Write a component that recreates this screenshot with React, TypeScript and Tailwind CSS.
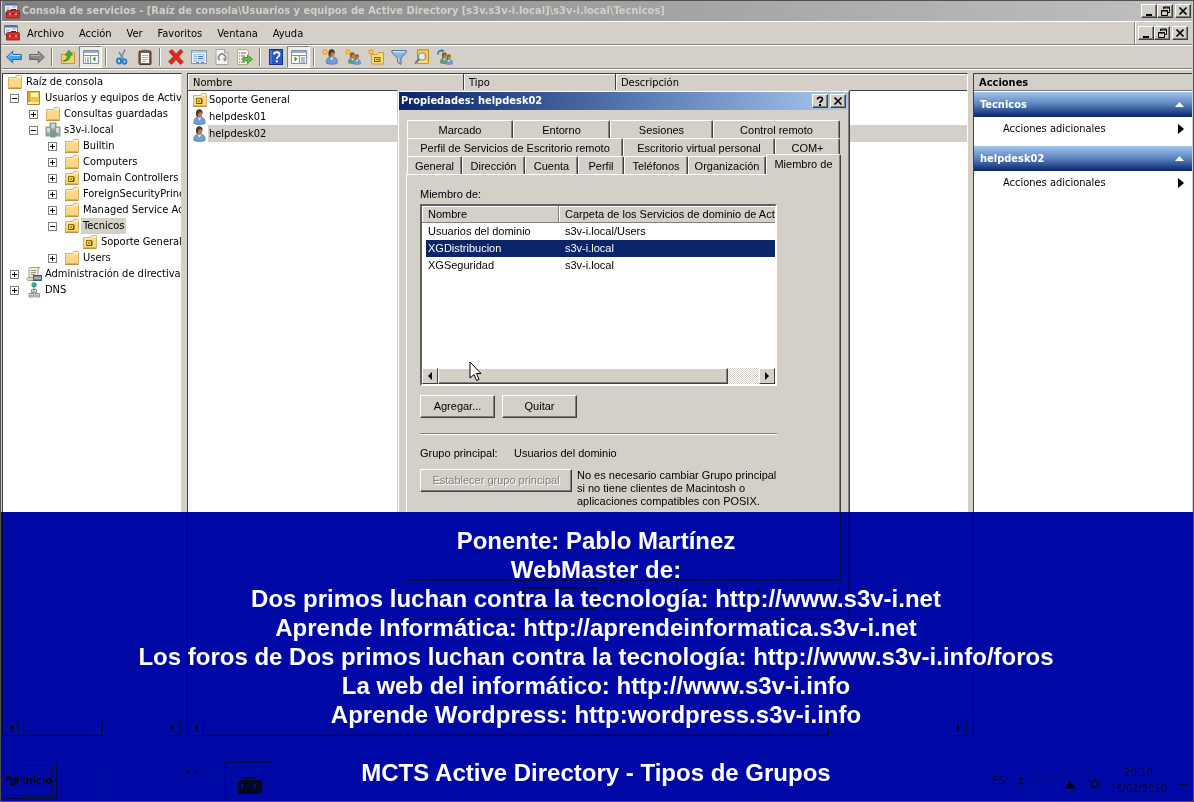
import type { ReactNode } from "react";
import clsx from "clsx";

const RAISED = "border border-t-white border-l-white border-r-[#404040] border-b-[#404040] bg-[#d4d0c8]";

/* ---------- icons ---------- */

function Svg({ children, size = 16, className }: { children: ReactNode; size?: number; className?: string }) {
  return (
    <svg width={size} height={size} viewBox="0 0 16 16" className={clsx("shrink-0", className)} aria-hidden="true">
      {children}
    </svg>
  );
}

function FolderIcon({ ou = false }: { ou?: boolean }) {
  return (
    <Svg>
      <path d="M1.500 3.500h7l1-2h4.500l.5 1v11h-13z" fill="#f9d888" stroke="#dbb05e" />
      <path d="M9.500 2.500h4.500" stroke="#fff6d8" />
      <path d="M2 4.500h7.500l1-1h3.500" stroke="#ffeeb8" fill="none" />
      <path d="M1 14.500h13.500" stroke="#c08f3c" />
      {ou && (
        <>
          <rect x="4.500" y="6.500" width="5" height="5" fill="#f0d04e" stroke="#8f7410" />
          <path d="M5 11.500h5V7" stroke="#5e4a04" fill="none" />
          <rect x="6" y="8" width="2" height="2" fill="#b8941a" />
        </>
      )}
    </Svg>
  );
}

function BookIcon() {
  return (
    <Svg>
      <path d="M1.500 1.500h12v13h-12z" fill="#f0c43c" stroke="#b4862a" />
      <path d="M2 2h2v12H2z" fill="#d9a32c" />
      <rect x="5" y="3" width="7" height="4" fill="#fff3c4" />
      <path d="M2 13h11" stroke="#fffbe6" strokeWidth="1.500" />
    </Svg>
  );
}

function DomainIcon() {
  return (
    <Svg>
      <rect x="5" y="1" width="6" height="9" fill="#a8b6b6" stroke="#6c7e7e" strokeWidth=".8" />
      <rect x="1" y="5" width="5" height="9" fill="#b3c2c2" stroke="#6c7e7e" strokeWidth=".8" />
      <rect x="10" y="5" width="5" height="9" fill="#b3c2c2" stroke="#6c7e7e" strokeWidth=".8" />
      <rect x="6" y="9" width="4" height="6" fill="#8fa0a0" stroke="#6c7e7e" strokeWidth=".8" />
      <path d="M6 3h4M6 5h4M2 7h3M2 9h3M11 7h3M11 9h3" stroke="#eef4f4" />
      <path d="M2 12h2M11 12h2M7 12h2" stroke="#41b04a" strokeWidth="1.500" />
    </Svg>
  );
}

function PolicyIcon() {
  return (
    <Svg>
      <path d="M4 1.500h10c-1.500 0-2 1-2 2.500v8H3V3c0-1 .3-1.500 1-1.500z" fill="#f2ecd6" stroke="#8f8a78" strokeWidth=".8" />
      <path d="M5 4.500h5M5 6.500h5M5 8.500h4" stroke="#9a947f" />
      <path d="M1 13.500c0-1.200.8-2 2-2h6v3H2.500c-1 0-1.500-.5-1.500-1z" fill="#e8d9a4" stroke="#8f8a78" strokeWidth=".8" />
      <rect x="7.500" y="9.500" width="8" height="5" fill="#74869c" stroke="#4a586b" />
      <path d="M8 12h7" stroke="#c9d4e2" />
    </Svg>
  );
}

function DnsIcon() {
  return (
    <Svg>
      <circle cx="8" cy="2.800" r="2.600" fill="#1b93a8" />
      <path d="M6 2l2-1 1 2-2 1z" fill="#55c07d" />
      <path d="M8 5.500v2" stroke="#777" />
      <path d="M5.500 7.500h5v3h-5zM3 11.500h4.500v3.500H3zM9 11.500h4.500v3.500H9z" fill="#eceff0" stroke="#7a8588" strokeWidth=".9" />
      <path d="M6.500 9h3M4 13.300h2.500M10 13.300h2.500" stroke="#8d999c" />
    </Svg>
  );
}

function Person({ x = 0, y = 0, s = 1, body = "#6f9dd6", hair = "#4a3a30" }: { x?: number; y?: number; s?: number; body?: string; hair?: string }) {
  return (
    <g transform={`translate(${x} ${y}) scale(${s})`}>
      <path d="M2.500 14.500c-.5-4 1-6 4-6h3c3 0 4.500 2 4 6-2 1.300-9 1.300-11 0z" fill={body} stroke="#4672a8" strokeWidth=".7" />
      <path d="M6 8.500l2 3 2-3z" fill="#eef4fb" />
      <ellipse cx="7.800" cy="5" rx="2.900" ry="3.900" fill="#b98052" />
      <path d="M4.600 5.500C4.200 1.500 6 .3 8 .3s3.500 1.700 3.100 4.900C10.500 3.800 9.500 3.200 8.300 3.400c-1 .2-1.300.8-1.500 1.600-.2 1-.2 2.500-.8 3.300-.8-.7-1.300-1.500-1.400-2.800z" fill={hair} />
    </g>
  );
}

function Spark() {
  return (
    <g>
      <path d="M3 0v6M0 3h6M1 1l4 4M5 1l-4 4" stroke="#f59a1b" strokeWidth="1.200" />
      <circle cx="3" cy="3" r="1.500" fill="#ffc84a" />
    </g>
  );
}

function UserIcon() {
  return (
    <Svg>
      <Person x={-0.500} />
    </Svg>
  );
}

function ToolboxIcon() {
  return (
    <Svg>
      <path d="M.5.5h13v9H.5z" fill="#eef2f7" stroke="#6b7d98" />
      <path d="M1 1.500h12" stroke="#4f6fa3" strokeWidth="2" />
      <path d="M2 5h4M2 7h3M8 4h4" stroke="#9aa8bd" />
      <path d="M7.500 8V6.500h4V8" fill="none" stroke="#7d1712" strokeWidth="1.200" />
      <path d="M2.500 8.500l1-1H15l.7 1V15H2.500z" fill="#d6342a" stroke="#8c1812" strokeWidth=".8" />
      <path d="M2.500 10.800h13" stroke="#8c1812" />
      <path d="M6 10v2M12 10v2" stroke="#f6d8d2" strokeWidth="1.200" />
    </Svg>
  );
}

const paneIcon = (flip: boolean) => (
  <Svg>
    <path d="M.5 1.500h15v13H.5z" fill="#fdfdfd" stroke="#8490a4" />
    <path d="M1 3h14" stroke="#9ba8c0" strokeWidth="2" />
    <path d="M1 6.500h14" stroke="#8490a4" />
    {flip ? (
      <>
        <path d="M3.500 7.500v5l3-2.500z" fill="#23a01d" />
        <path d="M8.500 7v7" stroke="#8490a4" />
        <path d="M10 9h4M10 11h4M10 13h4" stroke="#5d7bb0" />
      </>
    ) : (
      <>
        <path d="M7.500 7v7" stroke="#8490a4" />
        <path d="M2 9h1M4 9h2M2 11h1M4 11h2M2 13h1M4 13h2" stroke="#5d7bb0" />
        <path d="M12.500 7.500v5l-3-2.500z" fill="#23a01d" />
      </>
    )}
  </Svg>
);

const ICONS: Record<string, ReactNode> = {
  back: (
    <Svg>
      <path d="M.7 8l6-5.800v3.300h8.600v5H6.700v3.300z" fill="#45a7ea" stroke="#1764ad" />
      <path d="M2.500 7.800L6 4.500v2h8.500" stroke="#b5e1fb" fill="none" />
    </Svg>
  ),
  forward: (
    <Svg>
      <path d="M15.300 8l-6-5.800v3.300H.7v5h8.600v3.300z" fill="#8b8b8b" stroke="#626262" />
      <path d="M1.500 6.500h8.500v-2" stroke="#b8b8b8" fill="none" />
    </Svg>
  ),
  up: (
    <Svg>
      <path d="M1.500 5.500h6l1-2h6v11h-13z" fill="#f5ce6e" stroke="#c4943c" />
      <path d="M3 12c3-.5 4.500-3 4.500-6H5.200L9 1.200 12.500 6h-2.200c0 4-3 6.500-7.300 6z" fill="#3fb62d" stroke="#217a18" strokeWidth=".7" />
    </Svg>
  ),
  tree: paneIcon(false),
  cut: (
    <Svg>
      <path d="M11 .5L6.500 10M5 3l4.500 7.500" stroke="#7189a8" strokeWidth="1.500" />
      <ellipse cx="5" cy="12" rx="2" ry="2.600" fill="none" stroke="#1878d2" strokeWidth="1.800" />
      <ellipse cx="10.500" cy="12.600" rx="1.900" ry="2.200" fill="none" stroke="#1878d2" strokeWidth="1.800" />
    </Svg>
  ),
  paste: (
    <Svg>
      <rect x="2" y="2" width="12" height="13.500" rx="1" fill="#8a5f38" stroke="#55371c" />
      <rect x="4" y="4" width="8" height="10" fill="#fff" />
      <rect x="5.500" y=".8" width="5" height="3" fill="#5f6266" />
      <path d="M5 6.500h6M5 8.500h6M5 10.500h6M5 12.500h4" stroke="#a9aeb6" />
    </Svg>
  ),
  remove: (
    <Svg>
      <path d="M1 2.800L4 .5l4 4.400L12.500.2 15 2.800l-4.500 4.900 4.800 5-2.800 2.900L8 10.500l-4.500 5-3-2.700L5.300 7.600z" fill="#e3271b" stroke="#a3130b" strokeWidth=".6" />
    </Svg>
  ),
  props: (
    <Svg>
      <rect x=".5" y="1.500" width="15" height="13" fill="#f4f8fc" stroke="#8798ab" />
      <path d="M1 3h14" stroke="#b9c9da" strokeWidth="2" />
      <rect x="3" y="5.500" width="10" height="6.500" fill="#d7e9f8" stroke="#8fb1d0" strokeWidth=".8" />
      <path d="M4.500 7.500h1M7 7.500h5M4.500 9.500h1M7 9.500h5" stroke="#3e7bb5" />
      <path d="M5 13.500h3M10 13.500h3" stroke="#6f8296" />
    </Svg>
  ),
  refresh: (
    <Svg>
      <path d="M2 .5h8.500L14 4v11.500H2z" fill="#f5f5f5" stroke="#a2a2a2" />
      <path d="M10.500.5V4H14" fill="#ddd" stroke="#a2a2a2" />
      <path d="M5.800 11.300A3.500 3.500 0 1 1 11 10.500" fill="none" stroke="#8b8b8b" strokeWidth="1.700" />
      <path d="M8.500 9.500h4.300L11 13z" fill="#8b8b8b" />
    </Svg>
  ),
  exportList: (
    <Svg>
      <path d="M.5.5h9l2 2v13H.5z" fill="#fbf7e4" stroke="#b8a988" />
      <path d="M2 4h1M4 4h5M2 7h1M4 7h4M2 10h1M4 10h2M2 13h1M4 13h4" stroke="#5c6673" />
      <path d="M6 8.500h4.500V6l5 4.200-5 4.200v-2.600H6z" fill="#5ec43d" stroke="#2e8a1b" strokeWidth=".8" />
    </Svg>
  ),
  help: (
    <Svg>
      <rect x="1.500" y=".5" width="13" height="15" fill="#2b57c6" stroke="#183584" />
      <path d="M3 1v14" stroke="#6f93e6" />
      <path d="M6 5.500C6 2.500 11.500 2.500 11.500 5.500c0 2-2.700 2.200-2.700 4.500" fill="none" stroke="#fff" strokeWidth="1.800" />
      <rect x="7.800" y="11.300" width="2" height="2" fill="#fff" />
    </Svg>
  ),
  actionPane: paneIcon(true),
  newUser: (
    <Svg>
      <Person x={2} y={0} s={0.980} />
      <Spark />
    </Svg>
  ),
  newGroup: (
    <Svg>
      <Person x={1.500} y={3} s={0.750} body="#5ea556" hair="#7d5a21" />
      <Person x={6.500} y={5} s={0.680} hair="#9c5c2c" />
      <Spark />
    </Svg>
  ),
  newOu: (
    <Svg>
      <path d="M3.500 5.500h6l1-2h5v11.500h-12z" fill="#f8dc76" stroke="#c99d37" />
      <rect x="6.500" y="8.500" width="5.500" height="4" fill="#f5d050" stroke="#806306" />
      <path d="M8 10.500h3" stroke="#806306" />
      <Spark />
    </Svg>
  ),
  filter: (
    <Svg>
      <path d="M.8 1.500h14.400v2L10 9v6.500L6.500 13V9L.8 3.500z" fill="#8fb4d8" stroke="#48709c" strokeWidth=".9" />
      <path d="M2 2.800h12" stroke="#e6f1fa" />
      <path d="M7.500 9v3.500" stroke="#d5e6f5" />
    </Svg>
  ),
  find: (
    <Svg>
      <path d="M3.500.8h11v13.500h-11z" fill="#f3cc4f" stroke="#b28a26" />
      <path d="M4 13h10" stroke="#fff5cf" />
      <circle cx="8" cy="7.500" r="3.500" fill="#e3eef6" stroke="#8b98a3" strokeWidth="1.200" />
      <path d="M5.500 10L1 14.500" stroke="#6b7680" strokeWidth="1.800" />
    </Svg>
  ),
  addToGroup: (
    <Svg>
      <Person x={1.500} y={3} s={0.750} body="#5ea556" hair="#7d5a21" />
      <Person x={6.500} y={5} s={0.680} hair="#9c5c2c" />
      <path d="M.8 5.500C.8 2.500 2.500 1.500 5 1.500" fill="none" stroke="#2176c4" strokeWidth="1.500" />
      <path d="M4.500 0l3 1.600-3 2z" fill="#2176c4" />
    </Svg>
  ),
};

/* ---------- small controls ---------- */

const GLYPHS: Record<string, ReactNode> = {
  minimize: <path d="M2 8h6v2H2z" fill="#000" />,
  restore: <path d="M3.500 3V1h6v5.500H7.500M3 2h7M1.500 4.500h6v5h-6zM1 5h7" fill="none" stroke="#000" />,
  close: <path d="M1.500 1.500l7 7M8.500 1.500l-7 7" stroke="#000" strokeWidth="1.700" />,
  help: (
    <>
      <path d="M2.500 3.500C2.500.5 7.500.5 7.500 3.300 7.500 5 5 5 5 7" fill="none" stroke="#000" strokeWidth="1.600" />
      <path d="M4 8h2v2H4z" fill="#000" />
    </>
  ),
};

function CaptionButton({ kind, label }: { kind: string; label: string }) {
  return (
    <button aria-label={label} className={clsx(RAISED, "flex h-[14px] w-4 items-center justify-center shadow-[inset_-1px_-1px_#808080]")}>
      <svg width="10" height="10" viewBox="0 0 10 10">{GLYPHS[kind]}</svg>
    </button>
  );
}

function CaptionButtons() {
  return (
    <div className="flex">
      <CaptionButton kind="minimize" label="Minimizar" />
      <CaptionButton kind="restore" label="Restaurar" />
      <span className="w-[2px]" />
      <CaptionButton kind="close" label="Cerrar" />
    </div>
  );
}

function ScrollBar({ thumb }: { thumb: string }) {
  const arrow = clsx(RAISED, "flex w-4 shrink-0 items-center justify-center");
  return (
    <div className="flex h-4 shrink-0 bg-[repeating-conic-gradient(#ffffff_0_25%,#d4d0c8_0_50%)] bg-[length:2px_2px]">
      <button aria-label="Desplazar a la izquierda" className={arrow}>
        <svg width="4" height="8" viewBox="0 0 4 8"><path d="M4 0v8L0 4z" /></svg>
      </button>
      <div className={clsx(RAISED, "shadow-[inset_-1px_-1px_#808080]", thumb)} />
      <button aria-label="Desplazar a la derecha" className={clsx(arrow, "ml-auto")}>
        <svg width="4" height="8" viewBox="0 0 4 8"><path d="M0 0v8l4-4z" /></svg>
      </button>
    </div>
  );
}

function PushButton({ children, label, disabled, className }: { children?: ReactNode; label?: string; disabled?: boolean; className?: string }) {
  return (
    <button
      disabled={disabled}
      aria-label={label}
      className={clsx(
        RAISED,
        "h-[23px] pb-px shadow-[inset_-1px_-1px_#808080]",
        disabled && "text-[#808080] [text-shadow:1px_1px_#ffffff]",
        className ?? "w-[75px]",
      )}
    >
      {children}
    </button>
  );
}

/* ---------- main window ---------- */

const MENU = ["Archivo", "Acción", "Ver", "Favoritos", "Ventana", "Ayuda"];

const TOOLBAR: { icon: string; label: string; pressed?: boolean }[][] = [
  [{ icon: "back", label: "Atrás" }, { icon: "forward", label: "Adelante" }],
  [{ icon: "up", label: "Subir un nivel" }, { icon: "tree", label: "Árbol de consola", pressed: true }],
  [{ icon: "cut", label: "Cortar" }, { icon: "paste", label: "Pegar" }],
  [
    { icon: "remove", label: "Eliminar" },
    { icon: "props", label: "Propiedades" },
    { icon: "refresh", label: "Actualizar" },
    { icon: "exportList", label: "Exportar lista" },
  ],
  [{ icon: "help", label: "Ayuda" }, { icon: "actionPane", label: "Panel de acciones", pressed: true }],
  [
    { icon: "newUser", label: "Nuevo usuario" },
    { icon: "newGroup", label: "Nuevo grupo" },
    { icon: "newOu", label: "Nueva unidad organizativa" },
    { icon: "filter", label: "Filtro" },
    { icon: "find", label: "Buscar" },
    { icon: "addToGroup", label: "Agregar a un grupo" },
  ],
];

type Node = { label: string; pad: string; icon: ReactNode; sign?: "+" | "-"; selected?: boolean };

const TREE: Node[] = [
  { label: "Raíz de consola", pad: "pl-1", icon: <FolderIcon /> },
  { label: "Usuarios y equipos de Active", pad: "pl-[7px]", icon: <BookIcon />, sign: "-" },
  { label: "Consultas guardadas", pad: "pl-[26px]", icon: <FolderIcon />, sign: "+" },
  { label: "s3v-i.local", pad: "pl-[26px]", icon: <DomainIcon />, sign: "-" },
  { label: "Builtin", pad: "pl-[45px]", icon: <FolderIcon />, sign: "+" },
  { label: "Computers", pad: "pl-[45px]", icon: <FolderIcon />, sign: "+" },
  { label: "Domain Controllers", pad: "pl-[45px]", icon: <FolderIcon ou />, sign: "+" },
  { label: "ForeignSecurityPrinc", pad: "pl-[45px]", icon: <FolderIcon />, sign: "+" },
  { label: "Managed Service Ac", pad: "pl-[45px]", icon: <FolderIcon />, sign: "+" },
  { label: "Tecnicos", pad: "pl-[45px]", icon: <FolderIcon ou />, sign: "-", selected: true },
  { label: "Soporte General", pad: "pl-[79px]", icon: <FolderIcon ou /> },
  { label: "Users", pad: "pl-[45px]", icon: <FolderIcon />, sign: "+" },
  { label: "Administración de directivas", pad: "pl-[7px]", icon: <PolicyIcon />, sign: "+" },
  { label: "DNS", pad: "pl-[7px]", icon: <DnsIcon />, sign: "+" },
];

function Toolbar() {
  return (
    <div className="flex h-6 shrink-0 items-center border-t border-b border-t-white border-b-[#808080]">
      {TOOLBAR.map((group, i) => (
        <div key={i} className="flex items-center">
          {i > 0 && <span className="mx-[3px] h-[18px] w-[2px] border-r border-l border-r-white border-l-[#808080]" />}
          {group.map((b) => (
            <button
              key={b.icon}
              aria-label={b.label}
              className={clsx(
                "flex h-[22px] w-[23px] items-center justify-center",
                b.pressed && "border border-t-[#808080] border-r-white border-b-white border-l-[#808080] bg-[#ecebe6]",
              )}
            >
              {ICONS[b.icon]}
            </button>
          ))}
        </div>
      ))}
    </div>
  );
}

function TreePane() {
  return (
    <div className="flex w-[180px] shrink-0 flex-col border-t border-r border-l border-t-[#404040] border-r-[#d4d0c8] border-l-[#404040] bg-white">
      <ul className="flex-1 overflow-hidden">
        {TREE.map((n) => (
          <li key={n.label} className={clsx("flex h-4 items-center whitespace-nowrap", n.pad)}>
            {n.sign && (
              <button aria-label={n.label} className="mr-[7px] flex h-[9px] w-[9px] shrink-0 items-center justify-center border border-[#808080]">
                <svg width="5" height="5" viewBox="0 0 5 5">
                  <path d={n.sign === "+" ? "M0 2.500h5M2.500 0v5" : "M0 2.500h5"} stroke="#000" />
                </svg>
              </button>
            )}
            {n.icon}
            <span className={clsx("ml-px px-[2px] leading-4", n.selected && "bg-[#d4d0c8]")}>{n.label}</span>
          </li>
        ))}
      </ul>
      <ScrollBar thumb="w-[84px]" />
    </div>
  );
}

function ListPane() {
  const th = "h-[17px] border-r border-b border-[#404040] p-0 pt-px pl-[5px] text-left font-normal leading-[15px] shadow-[inset_1px_1px_#ffffff]";
  const rows = [
    { name: "Soporte General", icon: <FolderIcon ou /> },
    { name: "helpdesk01", icon: <UserIcon /> },
    { name: "helpdesk02", icon: <UserIcon />, selected: true },
  ];
  return (
    <div className="flex min-w-0 flex-1 flex-col border-t border-r border-l border-t-[#404040] border-r-white border-l-[#404040] bg-white">
      <div className="flex-1">
        <table className="w-full table-fixed border-separate border-spacing-0">
          <colgroup>
            <col className="w-[276px]" />
            <col className="w-[152px]" />
            <col />
          </colgroup>
          <thead className="bg-[#d4d0c8]">
            <tr>
              <th className={th}>Nombre</th>
              <th className={th}>Tipo</th>
              <th className={clsx(th, "border-r-0")}>Descripción</th>
            </tr>
          </thead>
          <tbody>
            {rows.map((r) => (
              <tr key={r.name}>
                <td className="p-0">
                  <div className="flex h-[17px] items-center pl-1">
                    {r.icon}
                    <span className={clsx("flex-1 pl-px leading-[17px]", r.selected && "bg-[#d4d0c8]")}>{r.name}</span>
                  </div>
                </td>
                <td colSpan={2} className={clsx("p-0", r.selected && "bg-[#d4d0c8]")} />
              </tr>
            ))}
          </tbody>
        </table>
      </div>
      <ScrollBar thumb="w-[625px]" />
    </div>
  );
}

function ActionsPane() {
  return (
    <div className="w-[219px] shrink-0 border-t border-l border-[#404040] bg-white">
      <h2 className="mb-px h-[17px] border-b border-[#808080] bg-[#d4d0c8] pl-[5px] leading-[17px] font-bold">Acciones</h2>
      {["Tecnicos", "helpdesk02"].map((name) => (
        <section key={name} className="pb-[5px]">
          <button className="flex h-[25px] w-full items-center justify-between bg-linear-to-b from-[#a3c6ee] via-[#5a82bd] to-[#0a246a] pr-2 pl-[6px] font-bold text-white">
            {name}
            <svg width="9" height="5" viewBox="0 0 9 5"><path d="M0 5h9L4.500 0z" fill="#fff" /></svg>
          </button>
          <button className="flex h-6 w-full items-center justify-between pr-2 pl-[29px]">
            Acciones adicionales
            <svg width="6" height="10" viewBox="0 0 6 10"><path d="M0 0v10l6-5z" /></svg>
          </button>
        </section>
      ))}
    </div>
  );
}

function ConsoleWindow() {
  return (
    <div className="flex min-h-0 flex-1 flex-col bg-[#d4d0c8] px-px">
      <header className="flex h-5 shrink-0 items-center bg-linear-to-r from-[#808080] to-[#c0c0c0] pr-px pl-[2px]">
        <ToolboxIcon />
        <h1 className="flex-1 truncate pl-[2px] font-bold text-[#d4d0c8]">
          Consola de servicios - [Raíz de consola\Usuarios y equipos de Active Directory [s3v.s3v-i.local]\s3v-i.local\Tecnicos]
        </h1>
        <CaptionButtons />
      </header>
      <div className="flex h-6 shrink-0 items-stretch border-t border-b border-t-white border-b-[#808080]">
        <div className="flex flex-1 items-center border-r border-[#808080] pl-[2px]">
          <ToolboxIcon />
          <nav className="flex gap-px pt-px">
            {MENU.map((m) => (
              <button key={m} className="px-[7px]">{m}</button>
            ))}
          </nav>
        </div>
        <div className="flex items-center border-l border-white pr-1 pl-[2px]">
          <CaptionButtons />
        </div>
      </div>
      <Toolbar />
      <main className="flex min-h-0 flex-1 gap-[5px] border-t border-white pt-[3px]">
        <TreePane />
        <ListPane />
        <ActionsPane />
      </main>
      <footer className="h-[22px] shrink-0" />
    </div>
  );
}

/* ---------- properties dialog ---------- */

function Tab({ children, width, active }: { children: ReactNode; width: string; active?: boolean }) {
  return (
    <button
      role="tab"
      aria-selected={!!active}
      className={clsx(
        "rounded-t-[2px] border-t border-r border-l border-t-white border-r-[#404040] border-l-white bg-[#d4d0c8] whitespace-nowrap shadow-[inset_-1px_0_#808080]",
        active ? "relative z-10 -mt-[2px] -mr-px -mb-px h-[21px] pb-[2px]" : "h-[18px]",
        width,
      )}
    >
      {children}
    </button>
  );
}

function MemberList() {
  const th = "h-[17px] border-b border-[#808080] p-0 pl-[6px] text-left font-normal leading-4 whitespace-nowrap shadow-[inset_1px_1px_#ffffff]";
  const members = [
    ["Usuarios del dominio", "s3v-i.local/Users"],
    ["XGDistribucion", "s3v-i.local"],
    ["XGSeguridad", "s3v-i.local"],
  ];
  return (
    <div className="mt-[3px] flex h-[182px] w-[357px] flex-col border-2 border-t-[#606060] border-r-white border-b-white border-l-[#606060] bg-white">
      <div className="flex-1 overflow-hidden">
        <table className="w-full table-fixed border-separate border-spacing-0">
          <colgroup>
            <col className="w-[137px]" />
            <col />
          </colgroup>
          <thead className="bg-[#d4d0c8]">
            <tr>
              <th className={clsx(th, "border-r")}>Nombre</th>
              <th className={clsx(th, "overflow-hidden")}>Carpeta de los Servicios de dominio de Activ</th>
            </tr>
          </thead>
          <tbody>
            {members.map(([name, folder], i) => (
              <tr key={name} className={clsx(i === 1 && "text-white")}>
                <td className="p-0 pl-1">
                  <div className={clsx("h-[17px] pl-[2px] leading-[17px]", i === 1 && "bg-[#0a246a]")}>{name}</div>
                </td>
                <td className={clsx("p-0 pl-[6px] leading-[17px]", i === 1 && "bg-[#0a246a]")}>{folder}</td>
              </tr>
            ))}
          </tbody>
        </table>
      </div>
      <ScrollBar thumb="w-[290px]" />
    </div>
  );
}

function PropertiesDialog() {
  return (
    <div
      role="dialog"
      aria-label="Propiedades: helpdesk02"
      className="absolute top-[89px] left-[396px] isolate w-[453px] border border-t-[#d4d0c8] border-r-[#404040] border-b-[#404040] border-l-[#d4d0c8] bg-[#d4d0c8]"
    >
      <div className="border border-t-white border-r-[#808080] border-b-[#808080] border-l-white">
        <div className="flex h-[18px] items-center bg-linear-to-r from-[#0a246a] to-[#a6caf0] pr-[2px] pl-[2px]">
          <h2 className="flex-1 font-bold text-white">Propiedades: helpdesk02</h2>
          <div className="flex gap-[2px]">
            <CaptionButton kind="help" label="Ayuda" />
            <CaptionButton kind="close" label="Cerrar" />
          </div>
        </div>
        <div className="px-[7px] pt-[10px] pb-2 font-['Liberation_Sans',Arial,sans-serif]">
          <div role="tablist">
            <div className="flex px-px">
              <Tab width="w-[106px]">Marcado</Tab>
              <Tab width="w-[97px]">Entorno</Tab>
              <Tab width="w-[103px]">Sesiones</Tab>
              <Tab width="flex-1">Control remoto</Tab>
            </div>
            <div className="flex px-px">
              <Tab width="w-[216px]">Perfil de Servicios de Escritorio remoto</Tab>
              <Tab width="w-[152px]">Escritorio virtual personal</Tab>
              <Tab width="flex-1">COM+</Tab>
            </div>
            <div className="flex h-[18px] px-px">
              <Tab width="w-[55px]">General</Tab>
              <Tab width="w-[63px]">Dirección</Tab>
              <Tab width="w-[53px]">Cuenta</Tab>
              <Tab width="w-[46px]">Perfil</Tab>
              <Tab width="w-[64px]">Teléfonos</Tab>
              <Tab width="w-[78px]">Organización</Tab>
              <Tab width="flex-1" active>Miembro de</Tab>
            </div>
          </div>
          <div className="min-h-[407px] border border-t-white border-r-[#404040] border-b-[#404040] border-l-white px-[13px] pt-3 shadow-[inset_-1px_-1px_#808080]">
            <p className="leading-[14px]">Miembro de:</p>
            <MemberList />
            <div className="mt-[9px] flex gap-[7px]">
              <PushButton>Agregar...</PushButton>
              <PushButton>Quitar</PushButton>
            </div>
            <hr className="mt-[15px] h-[2px] w-[357px] border-t border-b border-t-[#808080] border-b-white" />
            <div className="mt-[11px] flex leading-[14px]">
              <span className="w-[94px]">Grupo principal:</span>
              <span>Usuarios del dominio</span>
            </div>
            <div className="mt-[9px] flex gap-[5px]">
              <PushButton disabled className="w-[152px]">Establecer grupo principal</PushButton>
              <p className="leading-[13px]">
                No es necesario cambiar Grupo principal
                <br />
                si no tiene clientes de Macintosh o
                <br />
                aplicaciones compatibles con POSIX.
              </p>
            </div>
          </div>
          <div className="mt-[6px] flex justify-end gap-[6px] pr-px">
            <button aria-label="Aceptar" className="h-[23px] w-[75px] border-2 border-[#404040]" />
            <PushButton label="Cancelar" />
            <PushButton label="Aplicar" disabled />
            <PushButton label="Ayuda" />
          </div>
        </div>
      </div>
    </div>
  );
}

/* ---------- taskbar and caption band ---------- */

function Taskbar() {
  return (
    <div className="flex h-[43px] shrink-0 items-stretch border-t border-white bg-[#d4d0c8] px-px pt-[3px] pb-[2px]">
      <button className={clsx(RAISED, "flex w-[55px] items-center justify-center gap-px font-bold")}>
        <svg width="14" height="15" viewBox="0 0 14 15">
          <path d="M0 4c2-2 4-1 6 0v4c-2-1-4-1-6 0zM7 4c2 1 4 1 6 0v4c-1 2-2 3-4 3 0-1-1-2-2-3zM4 10c2-1 3 0 5 0v3c-2 1-3 0-5 0z" fill="#111" />
        </svg>
        <span className="border border-dotted border-[#404040] py-2">Inicio</span>
      </button>
      <div className="ml-[31px] flex w-[96px] items-center">
        <svg width="26" height="30" viewBox="0 0 26 30" fill="none" stroke="#8a8a8a">
          <path d="M2 3h14v10H2zM5 6h8M5 9h8M12 17a5 5 0 1 1 8 4l2 6" />
        </svg>
      </div>
      <button aria-label="Explorador" className="flex w-[41px] items-center">
        <svg width="31" height="30" viewBox="0 0 31 30" fill="none" stroke="#777">
          <path d="M1 27V3h28v24M1 7h28M19 13h9M13 26h9" />
          <path d="M3 4h3v3H3zM11 5h3v2h-3z" fill="#000" />
        </svg>
      </button>
      <button aria-label="Consola de servicios" className="flex w-[47px] items-end justify-center border-t border-l border-[#404040] pb-[3px]">
        <svg width="27" height="20" viewBox="0 0 27 20">
          <path d="M9 5V2h9v3" fill="none" stroke="#222" strokeWidth="2" />
          <path d="M1 7l4-3h20l2 3-2 11H2z" fill="#222" />
          <path d="M6 8v4M19 8v4" stroke="#999" strokeWidth="2" />
        </svg>
      </button>
      <div className="ml-auto flex items-center">
        <span className="mr-[13px]">ES</span>
        <svg width="6" height="10" viewBox="0 0 6 10" fill="none" stroke="#000" strokeWidth="1.500" className="mr-3">
          <path d="M.5 4L3 1.500 5.500 4M.5 8.500L3 6l2.500 2.500" />
        </svg>
        <svg width="66" height="20" viewBox="0 0 66 20" fill="none" stroke="#666" className="mr-2">
          <path d="M2 18V3h5l2 2h6v7H9L7 10H2M26 15V3h13v12" />
          <path d="M29 18h11L34 9z" fill="#000" />
          <path d="M49 4v8M52 4v8" />
          <circle cx="59" cy="13" r="3.500" stroke="#222" strokeWidth="2" />
          <path d="M59 7v5" stroke="#222" />
        </svg>
        <div className="text-center leading-4">
          <div>20:10</div>
          <div>16/02/2010</div>
        </div>
        <span className="mt-2 mr-[5px] ml-3 h-[2px] w-2 bg-[#222]" />
      </div>
    </div>
  );
}

const CREDITS = [
  "Ponente: Pablo Martínez",
  "WebMaster de:",
  "Dos primos luchan contra la tecnología: http://www.s3v-i.net",
  "Aprende Informática: http://aprendeinformatica.s3v-i.net",
  "Los foros de Dos primos luchan contra la tecnología: http://www.s3v-i.info/foros",
  "La web del informático: http://www.s3v-i.info",
  "Aprende Wordpress: http:wordpress.s3v-i.info",
];

export default function App() {
  return (
    <div className="relative isolate flex h-screen min-h-[780px] flex-col overflow-hidden border border-[#505050] bg-[#d4d0c8] font-['DejaVu_Sans_Condensed','DejaVu_Sans',sans-serif] text-[11px] leading-[14px] text-black">
      <ConsoleWindow />
      <Taskbar />
      <PropertiesDialog />

      <svg width="13" height="21" viewBox="0 0 13 21" className="absolute top-[360px] left-[468px]" aria-hidden="true">
        <path d="M1 1v16l4-3.500 2.500 6 2.500-1-2.500-6H12z" fill="#fff" stroke="#000" />
      </svg>

      {/* the band only darkens what is below it, so the dark edges stay visible */}
      <div className="absolute inset-x-0 top-[511px] bottom-0 bg-[#0009a6] mix-blend-darken" />
      <div className="absolute inset-x-0 top-[511px] bottom-0 pt-[14px] pr-[2px] text-center font-['Liberation_Sans',Arial,sans-serif] text-2xl leading-[29px] font-bold text-white">
        {CREDITS.map((line) => (
          <p key={line}>{line}</p>
        ))}
        <p className="mt-[29px]">MCTS Active Directory - Tipos de Grupos</p>
      </div>
    </div>
  );
}
